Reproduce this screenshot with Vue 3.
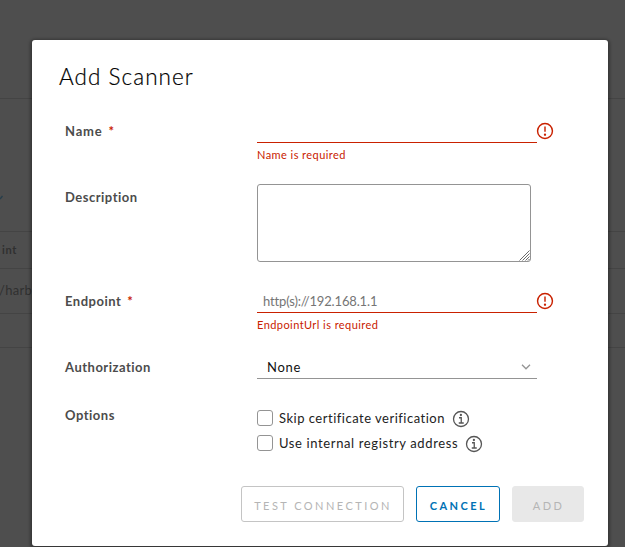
<script setup>
const requiredMark = '*'
</script>

<template>
  <div class="screen">
    <div class="page" aria-hidden="true">
      <div class="band band-top"></div>
      <div class="band band-tools">
        <svg class="caret" width="4" height="5" viewBox="0 0 4 5"><path d="M0 4 L2.5 1" /></svg>
      </div>
      <div class="band band-head">int</div>
      <div class="band band-row">/harbor</div>
      <div class="band band-foot"></div>
    </div>

    <div class="modal" role="dialog">
      <h3 class="title">Add Scanner</h3>

      <form class="form" @submit.prevent>
        <div class="row name">
          <label class="label">Name<span class="star">{{ requiredMark }}</span></label>
          <div class="control">
            <div class="line">
              <input class="input" type="text" />
              <svg class="icon err" viewBox="0 0 36 36"><circle cx="18" cy="18" r="13.4" /><path d="M18 10v9.5" /><circle class="dot" cx="18" cy="24.8" r="2.1" /></svg>
            </div>
            <span class="error">Name is required</span>
          </div>
        </div>

        <div class="row desc">
          <label class="label">Description</label>
          <div class="area-wrap">
            <textarea class="area"></textarea>
            <svg class="grip" width="11" height="11" viewBox="0 0 11 11"><path d="M.5 10.5l10-10M3.5 10.5l7-7M6.5 10.5l4-4M9 10.5l1.5-1.5" /></svg>
          </div>
        </div>

        <div class="row endpoint">
          <label class="label">Endpoint<span class="star">{{ requiredMark }}</span></label>
          <div class="control">
            <div class="line">
              <input class="input" type="text" placeholder="http(s)://192.168.1.1" />
              <svg class="icon err" viewBox="0 0 36 36"><circle cx="18" cy="18" r="13.4" /><path d="M18 10v9.5" /><circle class="dot" cx="18" cy="24.8" r="2.1" /></svg>
            </div>
            <span class="error">EndpointUrl is required</span>
          </div>
        </div>

        <div class="row auth">
          <label class="label">Authorization</label>
          <div class="select">
            <span>None</span>
            <svg width="10" height="6" viewBox="0 0 10 6"><path d="M1 .8 5 4.8 9 .8" /></svg>
          </div>
        </div>

        <div class="row options">
          <label class="label">Options</label>
          <div class="checks">
            <div class="check">
              <span class="box"></span><span class="check-text skip">Skip certificate verification</span>
              <svg class="icon info" viewBox="0 0 36 36"><circle cx="18" cy="18" r="15" /><path d="M14 15.5h4.5v10.5M13.5 26h10" /><circle class="dot" cx="17.8" cy="10" r="2.3" /></svg>
            </div>
            <div class="check">
              <span class="box"></span><span class="check-text">Use internal registry address</span>
              <svg class="icon info" viewBox="0 0 36 36"><circle cx="18" cy="18" r="15" /><path d="M14 15.5h4.5v10.5M13.5 26h10" /><circle class="dot" cx="17.8" cy="10" r="2.3" /></svg>
            </div>
          </div>
        </div>
      </form>

      <div class="footer">
        <button class="btn test" disabled>TEST CONNECTION</button>
        <button class="btn cancel">CANCEL</button>
        <button class="btn add" disabled>ADD</button>
      </div>
    </div>
  </div>
</template>

<style>
body { margin: 0; overflow: hidden; }
</style>

<style scoped>
* { box-sizing: border-box; }
.screen {
  display: grid;
  width: 625px;
  height: 547px;
  overflow: hidden;
  background: #4e4e4e;
  font-family: Lato, "Open Sans", sans-serif;
  font-size: 13px;
}
.page, .modal { grid-area: 1 / 1; }
.page { color: #303030; }
.band { border-bottom: 1px solid #444; white-space: nowrap; }
.band-top { height: 99px; }
.band-tools { height: 133px; padding-top: 96px; }
.band-head { height: 37px; line-height: 36px; padding-left: 2px; font-size: 11px; font-weight: 700; letter-spacing: .7px; }
.band-row { height: 45px; line-height: 43px; letter-spacing: .3px; text-indent: -1px; }
.band-foot { height: 34px; }
.caret { display: block; fill: none; stroke: #263e4b; stroke-width: 1.4; }
.modal {
  width: 576px;
  height: 506px;
  margin: 40px 0 0 32px;
  padding: 0 24px 0 27px;
  background: #fff;
  border-radius: 3px;
  box-shadow: 0 1px 3px 2px rgba(0, 0, 0, .3);
}
.title {
  margin: 0;
  height: 76px;
  padding-top: 22px;
  font-family: "Lato Light", Lato, sans-serif;
  font-size: 22.5px;
  line-height: 30px;
  font-weight: 300;
  letter-spacing: 1.05px;
  -webkit-text-stroke: .2px #000;
  color: #000;
}
.form { padding-left: 6px; }
.row { display: grid; grid-template-columns: 192px 296px; align-items: start; }
.label { line-height: 18px; padding-top: 6px; font-weight: 700; letter-spacing: .5px; color: #4c4c4c; }
.star { margin-left: 6px; color: #c92100; }
.name { height: 68px; }
.name .label { letter-spacing: .8px; }
.desc { height: 102px; }
.desc .label { padding-top: 4px; }
.endpoint { height: 66px; }
.auth { height: 50px; }
.options { height: 84px; }
.options .label { padding-top: 4px; }
.line { display: flex; align-items: flex-start; }
.input {
  flex: none;
  width: 280px;
  height: 27px;
  padding: 3px 6px 0;
  border: 0;
  border-bottom: 1px solid #c92100;
  border-radius: 0;
  outline: 0;
  background: none;
  font: inherit;
  letter-spacing: -.15px;
}
.input::placeholder { color: #757575; opacity: 1; }
.icon { flex: none; fill: none; }
.err { width: 20px; height: 20px; margin: 5px 0 0 -2px; stroke: #c92100; stroke-width: 2.6; }
.err .dot { fill: #c92100; stroke: none; }
.error { display: block; margin-top: 4px; font-size: 11px; line-height: 15px; letter-spacing: .44px; color: #c92100; }
.area-wrap { position: relative; width: 274px; height: 78px; }
.area { display: block; width: 274px; height: 78px; margin: 0; border: 1px solid #949494; border-radius: 3px; outline: 0; resize: none; background: #fff; }
.grip { position: absolute; right: 1px; bottom: 1px; fill: none; stroke: #6b6b6b; stroke-width: 1; }
.select {
  display: flex;
  align-items: center;
  justify-content: space-between;
  width: 280px;
  height: 27px;
  padding: 3px 6px 0 10px;
  border-bottom: 1px solid #949494;
  letter-spacing: .7px;
  color: #111;
}
.select svg { fill: none; stroke: #949494; stroke-width: 1.3; }
.checks { padding-top: 3px; }
.check { display: flex; align-items: center; height: 25px; color: #222; }
.box { width: 16px; height: 16px; margin-right: 6px; border: 1px solid #949494; border-radius: 3px; }
.check-text { letter-spacing: .62px; }
.check-text.skip { letter-spacing: .5px; }
.info { width: 18px; height: 18px; margin: 2px 0 0 7px; stroke: #565656; stroke-width: 2.6; }
.info .dot { fill: #565656; stroke: none; }
.footer { display: flex; justify-content: flex-end; gap: 12px; }
.btn {
  height: 36px;
  padding: 2px 0 0 1px;
  border: 1px solid;
  border-radius: 3px;
  background: #fff;
  font: 400 11px/34px Lato, sans-serif;
  letter-spacing: 2.45px;
  white-space: nowrap;
}
.test { width: 163px; border-color: #c4c4c4; color: #b5b5b5; }
.cancel { width: 84px; border-color: #0072b5; color: #0072b5; font-weight: 700; }
.add { width: 72px; border-color: #e8e8e8; background: #e8e8e8; color: #b5b5b5; }
</style>
